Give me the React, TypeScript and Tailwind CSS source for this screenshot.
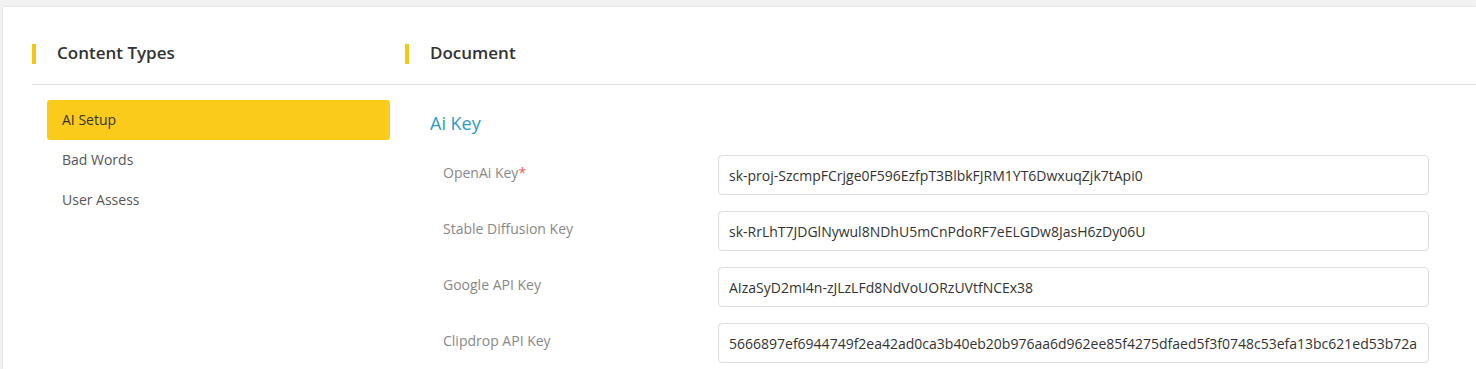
const menu = ["AI Setup", "Bad Words", "User Assess"];

const keys = [
  { label: "OpenAi Key", required: true, value: "sk-proj-SzcmpFCrjge0F596EzfpT3BlbkFJRM1YT6DwxuqZjk7tApi0" },
  { label: "Stable Diffusion Key", value: "sk-RrLhT7JDGlNywul8NDhU5mCnPdoRF7eELGDw8JasH6zDy06U" },
  { label: "Google API Key", value: "AIzaSyD2mI4n-zJLzLFd8NdVoUORzUVtfNCEx38" },
  { label: "Clipdrop API Key", value: "5666897ef6944749f2ea42ad0ca3b40eb20b976aa6d962ee85f4275dfaed5f3f0748c53efa13bc621ed53b72a" },
];

export default function App() {
  return (
    <main className="h-screen overflow-hidden bg-[#f2f2f2] pl-[3px] pt-[7px] font-['Open_Sans',sans-serif]">
      <div className="h-full bg-white pl-[29px] pr-[47px] pt-[37px] shadow-[0_0_2px_rgba(0,0,0,0.12)]">
        {/* header */}
        <div className="grid grid-cols-[373px_1fr] border-b border-[#dddddd] pb-[20px] mr-[-47px]">
          <div className="flex h-5 items-center">
            <span className="h-5 w-1 bg-[#f9c515]" />
            <h2 className="ml-[21px] -mt-0.5 text-[17px] font-semibold leading-5 text-[#333333]">Content Types</h2>
          </div>
          <div className="flex h-5 items-center">
            <span className="h-5 w-1 bg-[#f9c515]" />
            <h2 className="ml-[21px] -mt-0.5 text-[17px] font-semibold leading-5 text-[#333333]">Document</h2>
          </div>
        </div>

        <div className="grid grid-cols-[373px_1fr]">
          {/* sidebar */}
          <ul className="px-[15px] pt-[15px]">
            {menu.map((item, i) => (
              <li
                key={item}
                className={`flex h-10 items-center rounded-[3px] pb-[2px] pl-[15px] text-[14px] ${
                  i === 0 ? "bg-[#fbcb1b] text-[#333333]" : "text-[#555555]"
                }`}
              >
                {item}
              </li>
            ))}
          </ul>

          {/* form */}
          <section className="pl-[25px] pt-[25px]">
            <h3 className="mb-[19px] text-[18px] leading-[26px] text-[#2b9bc7]">Ai Key</h3>
            <div className="flex flex-col gap-4">
              {keys.map((k) => (
                <div key={k.label} className="flex items-start">
                  <label className="w-[288px] shrink-0 pl-[13px] pt-2 text-[14px] leading-5 text-[#888888]">
                    {k.label}
                    {k.required && <span className="text-[#f05a5a]">*</span>}
                  </label>
                  <input
                    readOnly
                    value={k.value}
                    className="h-10 flex-1 rounded-[4px] border border-[#dddddd] px-[10px] text-[14px] text-[#333333] outline-none"
                  />
                </div>
              ))}
            </div>
          </section>
        </div>
      </div>
    </main>
  );
}
